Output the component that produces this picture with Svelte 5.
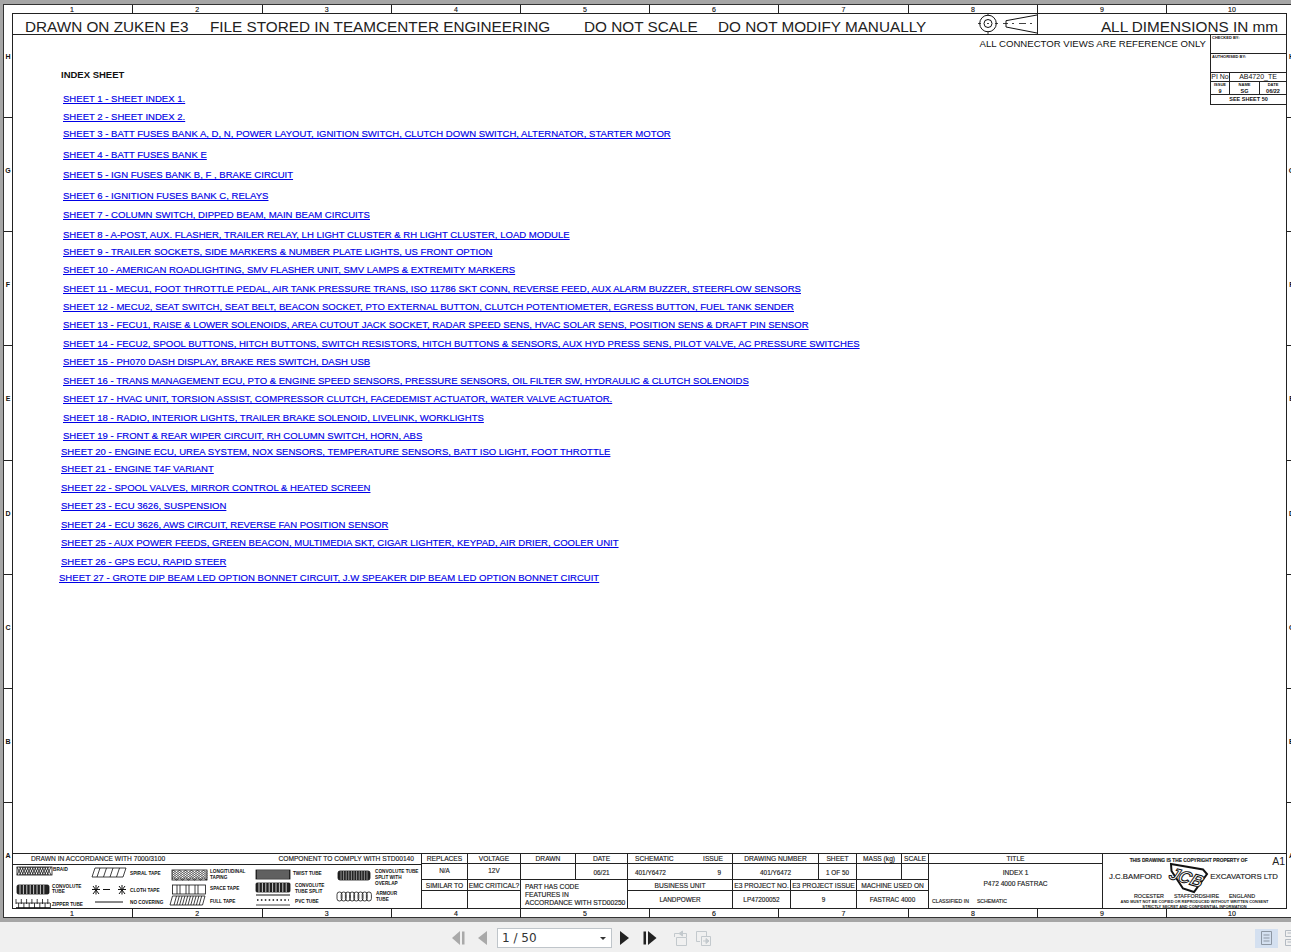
<script lang="ts">
	const columns = ['1', '2', '3', '4', '5', '6', '7', '8', '9', '10'];
	const zones = ['H', 'G', 'F', 'E', 'D', 'C', 'B', 'A'];

	// [centre of the row on the page, left edge, label]
	const sheets: [number, number, string][] = [
		[99, 63, 'SHEET 1 - SHEET INDEX 1.'],
		[117, 63, 'SHEET 2 - SHEET INDEX 2.'],
		[134, 63, 'SHEET 3 - BATT FUSES BANK A, D, N, POWER LAYOUT, IGNITION SWITCH, CLUTCH DOWN SWITCH, ALTERNATOR, STARTER MOTOR'],
		[155, 63, 'SHEET 4 - BATT FUSES BANK E'],
		[175, 63, 'SHEET 5 - IGN FUSES BANK B, F , BRAKE CIRCUIT'],
		[196, 63, 'SHEET 6 - IGNITION FUSES BANK C, RELAYS'],
		[215, 63, 'SHEET 7 - COLUMN SWITCH, DIPPED BEAM, MAIN BEAM CIRCUITS'],
		[235, 63, 'SHEET 8 - A-POST, AUX. FLASHER, TRAILER RELAY, LH LIGHT CLUSTER & RH LIGHT CLUSTER, LOAD MODULE'],
		[252, 63, 'SHEET 9 - TRAILER SOCKETS, SIDE MARKERS & NUMBER PLATE LIGHTS, US FRONT OPTION'],
		[270, 63, 'SHEET 10 - AMERICAN ROADLIGHTING, SMV FLASHER UNIT, SMV LAMPS & EXTREMITY MARKERS'],
		[289, 63, 'SHEET 11 - MECU1, FOOT THROTTLE PEDAL, AIR TANK PRESSURE TRANS, ISO 11786 SKT CONN, REVERSE FEED, AUX ALARM BUZZER, STEERFLOW SENSORS'],
		[307, 63, 'SHEET 12 - MECU2, SEAT SWITCH, SEAT BELT, BEACON SOCKET, PTO EXTERNAL BUTTON, CLUTCH POTENTIOMETER, EGRESS BUTTON, FUEL TANK SENDER'],
		[325, 63, 'SHEET 13 - FECU1, RAISE & LOWER SOLENOIDS, AREA CUTOUT JACK SOCKET, RADAR SPEED SENS, HVAC SOLAR SENS, POSITION SENS & DRAFT PIN SENSOR'],
		[344, 63, 'SHEET 14 - FECU2, SPOOL BUTTONS, HITCH BUTTONS, SWITCH RESISTORS, HITCH BUTTONS & SENSORS, AUX HYD PRESS SENS, PILOT VALVE, AC PRESSURE SWITCHES'],
		[362, 63, 'SHEET 15 - PH070 DASH DISPLAY, BRAKE RES SWITCH, DASH USB'],
		[381, 63, 'SHEET 16 - TRANS MANAGEMENT ECU, PTO & ENGINE SPEED SENSORS, PRESSURE SENSORS, OIL FILTER SW, HYDRAULIC & CLUTCH SOLENOIDS'],
		[399, 63, 'SHEET 17 - HVAC UNIT, TORSION ASSIST, COMPRESSOR CLUTCH, FACEDEMIST ACTUATOR, WATER VALVE ACTUATOR.'],
		[418, 63, 'SHEET 18 - RADIO, INTERIOR LIGHTS, TRAILER BRAKE SOLENOID, LIVELINK, WORKLIGHTS'],
		[436, 63, 'SHEET 19 - FRONT & REAR WIPER CIRCUIT, RH COLUMN SWITCH, HORN, ABS'],
		[452, 61, 'SHEET 20 - ENGINE ECU, UREA SYSTEM, NOX SENSORS, TEMPERATURE SENSORS, BATT ISO LIGHT, FOOT THROTTLE'],
		[469, 61, 'SHEET 21 - ENGINE T4F VARIANT'],
		[488, 61, 'SHEET 22 - SPOOL VALVES, MIRROR CONTROL & HEATED SCREEN'],
		[506, 61, 'SHEET 23 - ECU 3626, SUSPENSION'],
		[525, 61, 'SHEET 24 - ECU 3626, AWS CIRCUIT, REVERSE FAN POSITION SENSOR'],
		[543, 61, 'SHEET 25 - AUX POWER FEEDS, GREEN BEACON, MULTIMEDIA SKT, CIGAR LIGHTER, KEYPAD, AIR DRIER, COOLER UNIT'],
		[562, 61, 'SHEET 26 - GPS ECU, RAPID STEER'],
		[578, 59, 'SHEET 27 - GROTE DIP BEAM LED OPTION BONNET CIRCUIT, J.W SPEAKER DIP BEAM LED OPTION BONNET CIRCUIT']
	];

	const rows = sheets.map(([y, x, label], i) => ({
		label,
		left: x - 13,
		gap: i === 0 ? 12 : y - sheets[i - 1][0] - 12
	}));

	const legend: [number, number, string][] = [
		[53, 871, 'BRAID'],
		[52, 888, 'CONVOLUTE'],
		[52, 893, 'TUBE'],
		[52, 906, 'ZIPPER TUBE'],
		[130, 875, 'SPIRAL TAPE'],
		[130, 892, 'CLOTH TAPE'],
		[130, 904, 'NO COVERING'],
		[210, 873, 'LONGITUDINAL'],
		[210, 879, 'TAPING'],
		[210, 890, 'SPACE TAPE'],
		[210, 903, 'FULL TAPE'],
		[293, 875, 'TWIST TUBE'],
		[295, 887, 'CONVOLUTE'],
		[295, 893, 'TUBE SPLIT'],
		[295, 903, 'PVC TUBE'],
		[375, 873, 'CONVOLUTE TUBE'],
		[375, 879, 'SPLIT WITH'],
		[375, 885, 'OVERLAP'],
		[376, 895, 'ARMOUR'],
		[376, 901, 'TUBE']
	];

	const ticks = (from: number, to: number, step: number) => {
		const out: number[] = [];
		for (let v = from; v <= to; v += step) out.push(v);
		return out;
	};
</script>

<div class="viewer">
	<div class="sheet">
		<div class="corner"></div>
		<div class="ruler">
			{#each columns as c (c)}<span>{c}</span>{/each}
		</div>
		<div class="corner"></div>

		<div class="zones">
			{#each zones as z (z)}<span>{z}</span>{/each}
		</div>

		<div class="frame">
			<header class="band">
				<span>DRAWN ON ZUKEN E3</span>
				<span>FILE STORED IN TEAMCENTER ENGINEERING</span>
				<span>DO NOT SCALE</span>
				<span>DO NOT MODIFY MANUALLY</span>
				<svg class="projection" viewBox="0 0 59 20" width="59" height="20" aria-hidden="true">
					<g fill="none" stroke="#111" stroke-width="1">
						<circle cx="10" cy="9.5" r="8.300" />
						<circle cx="10" cy="9.5" r="4" />
						<path d="M0 9.500H3M17 9.500H20M10 0V2M10 17V20M9 9.500H11" stroke-width=".8" />
						<path d="M28 6.700L59 1M28 13L59 19M28 6.700V13" />
						<path d="M25 9.500H30M34 9.500H36M41 9.500H48M52 9.500H54" stroke-width=".8" />
					</g>
				</svg>
				<span class="dims">ALL DIMENSIONS IN mm</span>
			</header>

			<div class="body">
				<main class="index">
					<h1>INDEX SHEET</h1>
					{#each rows as row (row.label)}
						<a href="#top" style="margin-top:{row.gap}px;margin-left:{row.left}px">{row.label}</a>
					{/each}
				</main>
				<aside class="notes">
					<p class="views">ALL CONNECTOR VIEWS ARE REFERENCE ONLY</p>
					<div class="revision">
						<div class="sign">CHECKED BY:</div>
						<div class="sign">AUTHORISED BY:</div>
						<div class="pi"><span>PI No</span><span>AB4720_TE</span></div>
						<div class="issue">
							<div><small>ISSUE</small><b>9</b></div>
							<div><small>NAME</small><b>SG</b></div>
							<div><small>DATE</small><b>06/22</b></div>
						</div>
						<div class="see">SEE SHEET 50</div>
					</div>
				</aside>
			</div>

			<footer class="block">
				<div class="spec">
					<div class="spec-head">
						<span>DRAWN IN ACCORDANCE WITH 7000/3100</span>
						<span>COMPONENT TO COMPLY WITH STD00140</span>
					</div>
					<svg class="legend" viewBox="13 865 408 43" width="408" height="43">
						<g fill="none" stroke="#111" stroke-width=".8">
							<!-- braid -->
							<rect x="17" y="867" width="35" height="8" />
							{#each ticks(17, 48, 2.5) as x (x)}
								<path d="M{x} 867l4 8M{x + 4} 867l-4 8" />
							{/each}
							<!-- convolute -->
							<rect x="17" y="885" width="32" height="9" rx="1.5" fill="#222" />
							{#each ticks(20, 47, 3.4) as x (x)}
								<path d="M{x} 885v9" stroke="#ddd" stroke-width=".9" />
							{/each}
							<!-- zipper -->
							<path d="M16 903H50M16 907.500H50" />
							{#each ticks(16, 48, 5.3) as x (x)}
								<path d="M{x} 899v5M{x + 2.6} 903v5" />
							{/each}
							<!-- spiral tape -->
							<path d="M95 868H126L123 877H92Z" />
							{#each ticks(97, 118, 6.5) as x (x)}
								<path d="M{x + 3} 868l-3 9" />
							{/each}
							<!-- cloth tape -->
							<g stroke-width="1">
								<path d="M92 889.500H100M93 886l6 8M99 886l-6 8M96 885v9.500M103 889.500H110" />
								<path d="M118 889.500H126M119 886l6 8M125 886l-6 8M122 885v9.500" />
							</g>
							<path d="M95 902H123" stroke-width="1" />
							<!-- longitudinal taping -->
							<rect x="172" y="870" width="35" height="10" />
							{#each [871.5, 873.5, 875.5, 877.5, 879] as y (y)}
								<path d="M172 {y}q1.500 -2 3 0t3 0t3 0t3 0t3 0t3 0t3 0t3 0t3 0t3 0t3 0t2 0" />
							{/each}
							<!-- space tape -->
							<rect x="172.500" y="885" width="33" height="9" />
							<path d="M177 885v9M180 885v9M186 885v9M189 885v9M195 885v9M198 885v9" />
							<!-- full tape -->
							<path d="M172.500 896H205L202.500 905H170Z" />
							{#each ticks(174, 201, 2.8) as x (x)}
								<path d="M{x + 2.500} 896l-2.500 9" />
							{/each}
							<!-- twist -->
							<rect x="256" y="870" width="34" height="9" fill="#333" />
							{#each ticks(258, 288, 2) as x (x)}
								<path d="M{x} 870v9" stroke="#ccc" stroke-width=".6" />
							{/each}
							<!-- convolute split -->
							<rect x="256" y="883" width="34" height="9" rx="1" fill="#222" />
							{#each ticks(259, 288, 3.4) as x (x)}
								<path d="M{x} 883v9" stroke="#ddd" stroke-width=".9" />
							{/each}
							<!-- pvc -->
							<path d="M256 895H290" stroke-width="1.200" />
							<path d="M256 905H290" />
							<path d="M257 900H289" stroke-dasharray="1.500 2.400" stroke-width="1.600" />
							<!-- split with overlap -->
							<rect x="338" y="871" width="32" height="9" rx="2" fill="#222" />
							{#each ticks(341, 368, 2.6) as x (x)}
								<path d="M{x} 871v9" stroke="#bbb" stroke-width=".7" />
							{/each}
							<!-- armour -->
							{#each ticks(337, 367, 4.2) as x (x)}
								<rect x={x} y="892" width="5" height="9" rx="2.400" />
							{/each}
						</g>
						<g class="legend-text">
							{#each legend as [x, y, t] (`${x}-${y}`)}
								<text x={x} y={y}>{t}</text>
							{/each}
						</g>
					</svg>
				</div>

				<div class="cell head c-rep">REPLACES</div>
				<div class="cell head c-vol">VOLTAGE</div>
				<div class="cell head c-drawn">DRAWN</div>
				<div class="cell head c-date">DATE</div>
				<div class="cell head split c-sch"><span>SCHEMATIC</span><span>ISSUE</span></div>
				<div class="cell head c-num">DRAWING NUMBER</div>
				<div class="cell head c-sheet">SHEET</div>
				<div class="cell head c-mass">MASS (kg)</div>
				<div class="cell head c-scale">SCALE</div>
				<div class="cell head c-title">TITLE</div>

				<div class="cell c-rep r2 high">N/A</div>
				<div class="cell c-vol r2 high">12V</div>
				<div class="cell c-drawn r2"></div>
				<div class="cell c-date r2">06/21</div>
				<div class="cell split c-sch r2"><span>401/Y6472</span><span class="iss">9</span></div>
				<div class="cell c-num r2">401/Y6472</div>
				<div class="cell c-sheet r2">1 OF 50</div>
				<div class="cell c-mass r2"></div>
				<div class="cell c-scale r2"></div>

				<div class="cell head a-sim">SIMILAR TO</div>
				<div class="cell head a-emc">EMC CRITICAL?</div>
				<div class="cell a-sim r4"></div>
				<div class="cell a-emc r4"></div>
				<div class="cell code">PART HAS CODE<br />FEATURES IN<br />ACCORDANCE WITH STD00250</div>
				<div class="cell head a-bu">BUSINESS UNIT</div>
				<div class="cell head a-pno">E3 PROJECT NO.</div>
				<div class="cell head a-pis">E3 PROJECT ISSUE</div>
				<div class="cell head a-mach">MACHINE USED ON</div>
				<div class="cell a-bu r4">LANDPOWER</div>
				<div class="cell a-pno r4">LP47200052</div>
				<div class="cell a-pis r4">9</div>
				<div class="cell a-mach r4">FASTRAC 4000</div>

				<div class="cell title-box">
					<span>INDEX 1</span>
					<span>P472 4000 FASTRAC</span>
					<div class="classified"><span>CLASSIFIED IN</span><span>SCHEMATIC</span></div>
				</div>

				<div class="owner">
					<div class="copy">THIS DRAWING IS THE COPYRIGHT PROPERTY OF</div>
					<div class="size">A1</div>
					<div class="names">
						<span>J.C.BAMFORD</span>
						<svg class="jcb" viewBox="0 0 42 31" width="42" height="31">
							<path d="M3 2L35 7.500L39 12L26 30L15 26.500L3.500 9Z" fill="#fff" stroke="#111" stroke-width="2" />
							<text x="21" y="22" transform="rotate(16 21 15) skewX(-8)">JCB</text>
						</svg>
						<span>EXCAVATORS LTD</span>
					</div>
					<div class="place"><span>ROCESTER</span><span>STAFFORDSHIRE</span><span>ENGLAND</span></div>
					<div class="fine">AND MUST NOT BE COPIED OR REPRODUCED WITHOUT WRITTEN CONSENT</div>
					<div class="fine u">STRICTLY SECRET AND CONFIDENTIAL INFORMATION</div>
				</div>
			</footer>
		</div>

		<div class="zones right">
			{#each zones as z (z)}<span>{z}</span>{/each}
		</div>

		<div class="corner"></div>
		<div class="ruler bottom">
			{#each columns as c (c)}<span>{c}</span>{/each}
		</div>
		<div class="corner"></div>
	</div>

	<nav class="toolbar">
		<div class="pager">
			<svg width="14" height="16" viewBox="0 0 14 16"><path d="M9 1V15L1 8Z" fill="#a9a9a9" /><path d="M11 1.500H13.500V14.500H11Z" fill="#a9a9a9" /></svg>
			<svg class="prev" width="11" height="16" viewBox="0 0 11 16"><path d="M10 1V15L1 8Z" fill="#a9a9a9" /></svg>
			<div class="select"><span>1 / 50</span><i></i></div>
			<svg class="next" width="11" height="16" viewBox="0 0 11 16"><path d="M1 1V15L10 8Z" fill="#222" /></svg>
			<svg class="last" width="14" height="16" viewBox="0 0 14 16"><path d="M0.500 1.500H3V14.500H0.500Z" fill="#222" /><path d="M5 1V15L13.500 8Z" fill="#222" /></svg>
			<svg class="swap" width="15" height="16" viewBox="0 0 15 16" fill="none" stroke="#c3c9cd"><path d="M1.500 3.500H6M10 3.500H13.500V7M1.500 3.500V7M3.500 7.500H13.500V15.500H3.500Z" /><path d="M9.500 1L6 3.500L9.500 6Z" fill="#c3c9cd" /></svg>
			<svg class="swap2" width="16" height="16" viewBox="0 0 16 16" fill="none" stroke="#c3c9cd"><path d="M1.500 1.500H11.500V6M1.500 1.500V11.500H5M6.500 6.500H15.500V15.500H6.500Z" /><path d="M8 11H12" /><path d="M11 8.500L14 11L11 13.500Z" fill="#c3c9cd" /></svg>
		</div>
		<div class="modes">
			<div class="mode on">
				<svg width="11" height="14" viewBox="0 0 11 14" fill="none" stroke="#8d97a3"><path d="M.5.500H10.500V13.500H.5ZM2.500 4H8.500M2.500 7H8.500M2.500 10H8.500" /></svg>
			</div>
			<svg class="mode-b" width="11" height="16" viewBox="0 0 11 16" fill="none" stroke="#b3bac2"><path d="M.5.500H10.500V6.500H.5ZM.5 9.500H10.500V15.500H.5ZM2.500 3H8.500M2.500 12H8.500" /></svg>
		</div>
	</nav>
</div>

<style>
	:global(body) {
		margin: 0;
		background: #a6a6a6;
		overflow: hidden;
	}

	.viewer {
		width: 1291px;
		height: 952px;
		display: flex;
		flex-direction: column;
		overflow: hidden;
		font-family: 'Liberation Sans', Arial, sans-serif;
		color: #111;
	}

	.sheet {
		margin: 4px 0 0 3px;
		height: 914px;
		flex: none;
		box-sizing: border-box;
		background: #fff;
		border: solid #333;
		border-width: 1px 0 1px 1px;
		display: grid;
		grid-template-columns: 8px 1275px 9px;
		grid-template-rows: 8px 896px 1fr;
	}

	.ruler {
		display: grid;
		grid-template-columns: 120px 129.500px 129.500px 129px 129px 129px 130px 129px 129px 1fr;
		font-size: 7px;
		line-height: 9px;
		text-align: center;
		-webkit-text-stroke: 0.150px #111;
	}

	.ruler span + span {
		border-left: 1px solid #222;
	}

	.ruler span:last-child {
		padding-left: 10px;
	}

	.zones {
		display: grid;
		grid-template-rows: 105px repeat(6, 114.200px) 1fr;
		font-size: 7px;
		font-weight: bold;
		line-height: 12px;
		text-align: center;
	}

	.zones span {
		border-bottom: 1px solid #222;
		padding-top: 47px;
		box-sizing: border-box;
	}

	.zones span:first-child {
		padding-top: 38px;
	}

	.zones span:last-child {
		border-bottom: 0;
	}

	.frame {
		box-sizing: border-box;
		border: 1px solid #222;
		display: flex;
		flex-direction: column;
		min-height: 0;
	}

	.band {
		flex: none;
		height: 21px;
		box-sizing: border-box;
		border-bottom: 1px solid #222;
		padding-left: 12px;
		display: grid;
		grid-template-columns: 185px 374px 134px 260px 59px 1fr;
		font-size: 15.300px;
		line-height: 14px;
		white-space: nowrap;
		color: #222;
	}

	.band span {
		padding-top: 6px;
	}

	.projection {
		display: block;
		border-right: 1px solid #222;
		box-sizing: content-box;
	}

	.band .dims {
		text-align: right;
		padding-right: 8px;
	}

	.body {
		flex: 1;
		min-height: 0;
		display: flex;
		justify-content: space-between;
	}

	.index {
		display: flex;
		flex-direction: column;
		align-items: flex-start;
	}

	h1 {
		margin: 34px 0 0 48px;
		font-size: 9.500px;
		line-height: 12px;
	}

	a {
		display: block;
		font-size: 9.550px;
		line-height: 12px;
		color: #0000e6;
		text-decoration: underline;
		white-space: nowrap;
		-webkit-text-stroke: 0.150px #0000e6;
	}

	.notes {
		display: flex;
		align-items: flex-start;
		gap: 4px;
	}

	.views {
		margin: 3px 0 0;
		font-size: 9.600px;
		line-height: 12px;
		white-space: nowrap;
		color: #111;
	}

	.revision {
		width: 76px;
		height: 70px;
		box-sizing: border-box;
		border: solid #222;
		border-width: 0 0 1px 1px;
		display: grid;
		grid-template-rows: 19px 19px 9px 13px 1fr;
		font-size: 5px;
	}

	.sign {
		border-bottom: 1px solid #222;
		font-size: 4px;
		font-weight: bold;
		line-height: 5px;
		padding-left: 1px;
	}

	.pi {
		border-bottom: 1px solid #222;
		display: grid;
		grid-template-columns: 18px 1fr;
		font-size: 7px;
		line-height: 7px;
		text-align: center;
	}

	.pi span + span {
		border-left: 1px solid #222;
	}

	.issue {
		border-bottom: 1px solid #222;
		display: grid;
		grid-template-columns: 18px 30px 1fr;
		text-align: center;
	}

	.issue div {
		display: flex;
		flex-direction: column;
		line-height: 6px;
	}

	.issue div + div {
		border-left: 1px solid #222;
	}

	.issue small {
		font-size: 4px;
		font-weight: bold;
	}

	.issue b {
		font-size: 5.500px;
	}

	.see {
		font-size: 5.500px;
		font-weight: bold;
		line-height: 9px;
		text-align: center;
	}

	/* column lines sit at: 421 467 520 575 627 732 790 818 856 901 928 1102 */
	.block {
		flex: none;
		height: 55px;
		box-sizing: border-box;
		border-top: 1px solid #222;
		display: grid;
		grid-template-columns: 408px 46px 53px 55px 52px 105px 58px 28px 38px 45px 27px 174px 1fr;
		grid-template-rows: 10px 16px 11px 1fr;
		font-size: 6.400px;
		color: #222;
		-webkit-text-stroke: 0.150px #222;
	}

	.cell {
		border-left: 1px solid #222;
		border-bottom: 1px solid #222;
		display: flex;
		align-items: center;
		justify-content: center;
		line-height: 9px;
		white-space: nowrap;
		overflow: hidden;
		min-width: 0;
	}

	.head {
		font-size: 6.650px;
	}

	.split {
		justify-content: space-between;
		padding: 0 9px 0 7px;
	}

	.iss {
		margin-right: 2px;
	}

	.spec {
		grid-column: 1;
		grid-row: 1 / 5;
		display: flex;
		flex-direction: column;
	}

	.spec-head {
		height: 10px;
		flex: none;
		border-bottom: 1px solid #222;
		display: flex;
		justify-content: space-between;
		padding: 0 7px 0 18px;
		font-size: 6.650px;
		line-height: 9px;
	}

	.legend {
		display: block;
		flex: none;
	}

	.legend-text text {
		font-size: 4.700px;
		font-weight: bold;
		fill: #111;
		stroke: none;
	}

	.c-rep { grid-column: 2; }
	.c-vol { grid-column: 3; }
	.c-drawn { grid-column: 4; }
	.c-date { grid-column: 5; }
	.c-sch { grid-column: 6; }
	.c-num { grid-column: 7 / 9; }
	.c-sheet { grid-column: 9; }
	.c-mass { grid-column: 10; }
	.c-scale { grid-column: 11; }
	.c-title { grid-column: 12; }

	.r2 {
		grid-row: 2;
		padding-top: 2px;
		box-sizing: border-box;
	}

	.r2.high {
		padding: 0 0 3px;
	}

	.a-sim { grid-column: 2; grid-row: 3; }
	.a-emc { grid-column: 3; grid-row: 3; }
	.a-bu { grid-column: 6; grid-row: 3; }
	.a-pno { grid-column: 7; grid-row: 3; }
	.a-pis { grid-column: 8 / 10; grid-row: 3; }
	.a-mach { grid-column: 10 / 12; grid-row: 3; }

	.a-sim.r4, .a-emc.r4, .a-bu.r4, .a-pno.r4, .a-pis.r4, .a-mach.r4 {
		grid-row: 4;
		border-bottom: 0;
	}

	.code {
		grid-column: 4 / 6;
		grid-row: 3 / 5;
		display: block;
		border-bottom: 0;
		padding: 3px 0 0 4px;
		font-size: 6.700px;
		line-height: 8px;
		z-index: 1;
		overflow: visible;
	}

	.title-box {
		grid-column: 12;
		grid-row: 2 / 5;
		border-bottom: 0;
		flex-direction: column;
		justify-content: flex-start;
		align-items: center;
		padding-top: 4px;
		gap: 2px;
		line-height: 9px;
		font-size: 6.600px;
	}

	.classified {
		align-self: flex-start;
		display: flex;
		gap: 8px;
		margin: 7px 0 0 3px;
		font-size: 5.200px;
	}

	.owner {
		grid-column: 13;
		grid-row: 1 / 5;
		border-left: 1px solid #222;
		position: relative;
		display: flex;
		flex-direction: column;
		align-items: center;
		line-height: 6px;
		overflow: hidden;
		height: 54px;
	}

	.copy {
		margin: 4px 0 0 -12px;
		font-size: 4.800px;
		font-weight: bold;
		flex: none;
	}

	.size {
		position: absolute;
		top: 2px;
		right: 1px;
		font-size: 10.500px;
		line-height: 11px;
		-webkit-text-stroke: 0;
	}

	.names {
		width: 100%;
		flex: none;
		display: flex;
		align-items: center;
		justify-content: space-between;
		padding: 0 8px 0 6px;
		box-sizing: border-box;
		font-size: 7.800px;
		height: 26px;
		margin-bottom: 3px;
	}

	.jcb {
		flex: none;
		overflow: visible;
		margin-left: 5px;
	}

	.jcb text {
		font: italic bold 17px 'Liberation Sans', sans-serif;
		text-anchor: middle;
		fill: #fff;
		stroke: #111;
		stroke-width: 1;
	}

	.place {
		display: flex;
		gap: 10px;
		font-size: 5.400px;
		line-height: 6px;
		flex: none;
	}

	.fine {
		font-size: 3.950px;
		font-weight: bold;
		line-height: 5px;
		flex: none;
		-webkit-text-stroke: 0;
	}

	.u {
		text-decoration: underline;
	}

	.toolbar {
		margin-top: 4px;
		flex: 1;
		box-sizing: border-box;
		padding: 2px 0 0 451px;
		background: #f0f0f0;
		display: flex;
		align-items: center;
		justify-content: space-between;
	}

	.pager {
		display: flex;
		align-items: center;
	}

	.prev { margin-left: 12px; }
	.next { margin-left: 7px; }
	.last { margin-left: 13px; }
	.swap { margin-left: 16px; }
	.swap2 { margin-left: 7px; }

	.select {
		margin-left: 9px;
		width: 115px;
		height: 20px;
		box-sizing: border-box;
		background: #fff;
		border: 1px solid #bfc5ca;
		display: flex;
		align-items: center;
		justify-content: space-between;
		padding: 0 5px 0 4px;
		font-family: 'DejaVu Sans', sans-serif;
		font-size: 12px;
		color: #333;
	}

	.select i {
		border: solid transparent;
		border-width: 3px 3px 0;
		border-top-color: #333;
	}

	.modes {
		display: flex;
		align-items: center;
		gap: 7px;
		margin-right: -5px;
	}

	.mode {
		width: 23px;
		height: 19px;
		display: flex;
		align-items: center;
		justify-content: center;
	}

	.on {
		background: #d4e0f0;
	}
</style>
